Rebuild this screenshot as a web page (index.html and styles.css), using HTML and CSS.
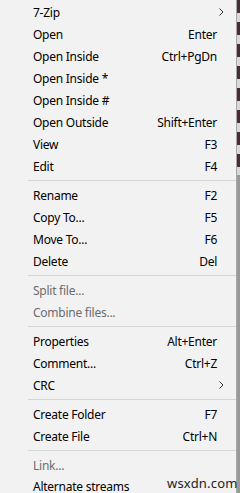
FILE: index.html
```html
<!DOCTYPE html>
<html lang="en">
<head>
    <meta charset="UTF-8">
    <title>7-Zip Context Menu</title>
    <link rel="stylesheet" href="styles.css">
</head>
<body>
    <div class="screen">
        <div class="menu">
            <div class="item">7-Zip<span class="arrow"><svg width="5" height="8" viewBox="0 0 5 8"><path d="M0.5 0.5 L4 4 L0.5 7.5" fill="none" stroke="#333" stroke-width="1"/></svg></span></div>
            <div class="item">Open<span class="key">Enter</span></div>
            <div class="item">Open Inside<span class="key">Ctrl+PgDn</span></div>
            <div class="item">Open Inside *</div>
            <div class="item">Open Inside #</div>
            <div class="item">Open Outside<span class="key">Shift+Enter</span></div>
            <div class="item">View<span class="key">F3</span></div>
            <div class="item">Edit<span class="key">F4</span></div>
            <div class="sep"></div>
            <div class="item">Rename<span class="key">F2</span></div>
            <div class="item">Copy To...<span class="key">F5</span></div>
            <div class="item">Move To...<span class="key">F6</span></div>
            <div class="item">Delete<span class="key">Del</span></div>
            <div class="sep"></div>
            <div class="item disabled">Split file...</div>
            <div class="item disabled">Combine files...</div>
            <div class="sep"></div>
            <div class="item">Properties<span class="key">Alt+Enter</span></div>
            <div class="item">Comment...<span class="key">Ctrl+Z</span></div>
            <div class="item">CRC<span class="arrow"><svg width="5" height="8" viewBox="0 0 5 8"><path d="M0.5 0.5 L4 4 L0.5 7.5" fill="none" stroke="#333" stroke-width="1"/></svg></span></div>
            <div class="sep"></div>
            <div class="item">Create Folder<span class="key">F7</span></div>
            <div class="item">Create File<span class="key">Ctrl+N</span></div>
            <div class="sep"></div>
            <div class="item disabled">Link...</div>
            <div class="item last">Alternate streams</div>
        </div>
        <div class="edge"></div>
        <div class="watermark">wsxdn.com</div>
    </div>
</body>
</html>
```

FILE: styles.css
```css
* {
    margin: 0;
    padding: 0;
    box-sizing: border-box;
}

body {
    font-family: 'Noto Sans', sans-serif;
    font-size: 12px;
    letter-spacing: -0.25px;
    color: #000;
    background: #f2f2f2;
    width: 240px;
    height: 493px;
    overflow: hidden;
}

.screen {
    position: relative;
    display: flex;
    height: 493px;
}

.menu {
    width: 236px;
    padding-top: 1px;
    background: #f2f2f2;
}

.item {
    display: flex;
    justify-content: space-between;
    align-items: center;
    height: 22px;
    padding-left: 33px;
    padding-right: 19px;
    white-space: nowrap;
}

.item.last {
    height: 20px;
}

.item.disabled {
    color: #6d6d6d;
}

.arrow {
    display: flex;
    margin-right: -7px;
}

.sep {
    height: 7px;
    margin-left: 28px;
    padding-top: 3px;
}

.sep::after {
    content: "";
    display: block;
    height: 1px;
    background: #d7d7d7;
}

.edge {
    width: 4px;
    border-left: 1px solid #a8a8a8;
    background:
        repeating-linear-gradient(to bottom, #4a2b3a 0, #4a2b3a 13px, #d8d8d8 13px, #d8d8d8 22px) top / 100% 175px no-repeat,
        #9a9a9a;
}

.watermark {
    position: absolute;
    left: 167px;
    top: 474px;
    font-size: 13px;
    letter-spacing: 0.2px;
    color: #222;
}
```
